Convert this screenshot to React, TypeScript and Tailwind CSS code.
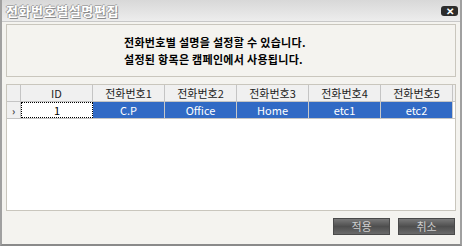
import { FC } from "react";

const cols = ["전화번호1", "전화번호2", "전화번호3", "전화번호4", "전화번호5"];
const values = ["C.P", "Office", "Home", "etc1", "etc2"];

const App: FC = () => {
	return (
		<div className="w-[462px] h-[249px] bg-white overflow-hidden" style={{ fontFamily: '"Noto Sans CJK KR", "Noto Sans", sans-serif' }}>
			<div className="flex flex-col w-[462px] h-[246px] bg-[#f4f3ef] border-l-2 border-r-2 border-b-2 border-l-[#a0a0a0] border-r-[#a0a0a0] border-b-[#8a8a8a]">
				{/* title bar */}
				<div className="flex items-center justify-between h-[22px] pl-[4px] pr-[2px] bg-gradient-to-b from-[#d8d8d8] to-[#ededed] border-b border-[#c8c8c8]">
					<span
						className="text-[13px] font-bold text-white leading-none tracking-[0.6px]"
						style={{ textShadow: "1px 1px 0 #8c8c8c, -1px 0 0 #9c9c9c, 0 -1px 0 #a8a8a8" }}
					>
						전화번호별설명편집
					</span>
					<div className="flex items-center justify-center w-[17px] h-[10px] rounded-[3px] bg-[#2c2c2c] text-white text-[10px] font-bold leading-none">
						✕
					</div>
				</div>

				{/* info panel */}
				<div className="mx-[4px] mt-[2px] h-[53px] border border-[#c9c6bd] bg-[#f4f3ef] flex flex-col justify-center gap-[5px] pl-[117px] text-[11px] font-bold text-black leading-[12px] tracking-[0.3px]">
					<p>전화번호별 설명을 설정할 수 있습니다.</p>
					<p>설정된 항목은 캠페인에서 사용됩니다.</p>
				</div>

				{/* grid */}
				<div className="mx-[4px] mt-[7px] h-[127px] border border-[#c9c6bd] bg-white">
					<div className="flex h-[17px] bg-[#f0f0f0] border-b border-[#c4c4c4] text-[11px] text-[#222]">
						<div className="w-[14px] border-r border-[#c4c4c4]" />
						<div className="w-[72px] flex items-center justify-center border-r border-[#c4c4c4]">ID</div>
						{cols.map(c => (
							<div key={c} className="w-[72px] flex items-center justify-center border-r border-[#c4c4c4]">
								{c}
							</div>
						))}
					</div>
					<div className="flex h-[17px] text-[11px] border-b border-[#c4c4c4]">
						<div className="w-[14px] flex items-center justify-center border-r border-[#c4c4c4] bg-[#f0f0f0] text-[10px] font-bold text-[#444]">
							›
						</div>
						<div className="w-[72px] flex items-center justify-center border border-dotted border-black bg-white text-black">1</div>
						{values.map(v => (
							<div key={v} className="w-[72px] flex items-center justify-center border-r border-[#c8c8c8] bg-[#316ac5] text-white">
								{v}
							</div>
						))}
					</div>
				</div>

				{/* buttons */}
				<div className="flex justify-end gap-[8px] mt-[7px] pr-[5px]">
					{["적용", "취소"].map(b => (
						<button
							key={b}
							className="w-[57px] h-[17px] flex items-center justify-center text-[11px] text-[#cfcfcf] border border-[#4a4a4a] bg-gradient-to-b from-[#7a7a7a] via-[#4e4e4e] to-[#6a6a6a]"
						>
							{b}
						</button>
					))}
				</div>
			</div>
		</div>
	);
};

export default App;
